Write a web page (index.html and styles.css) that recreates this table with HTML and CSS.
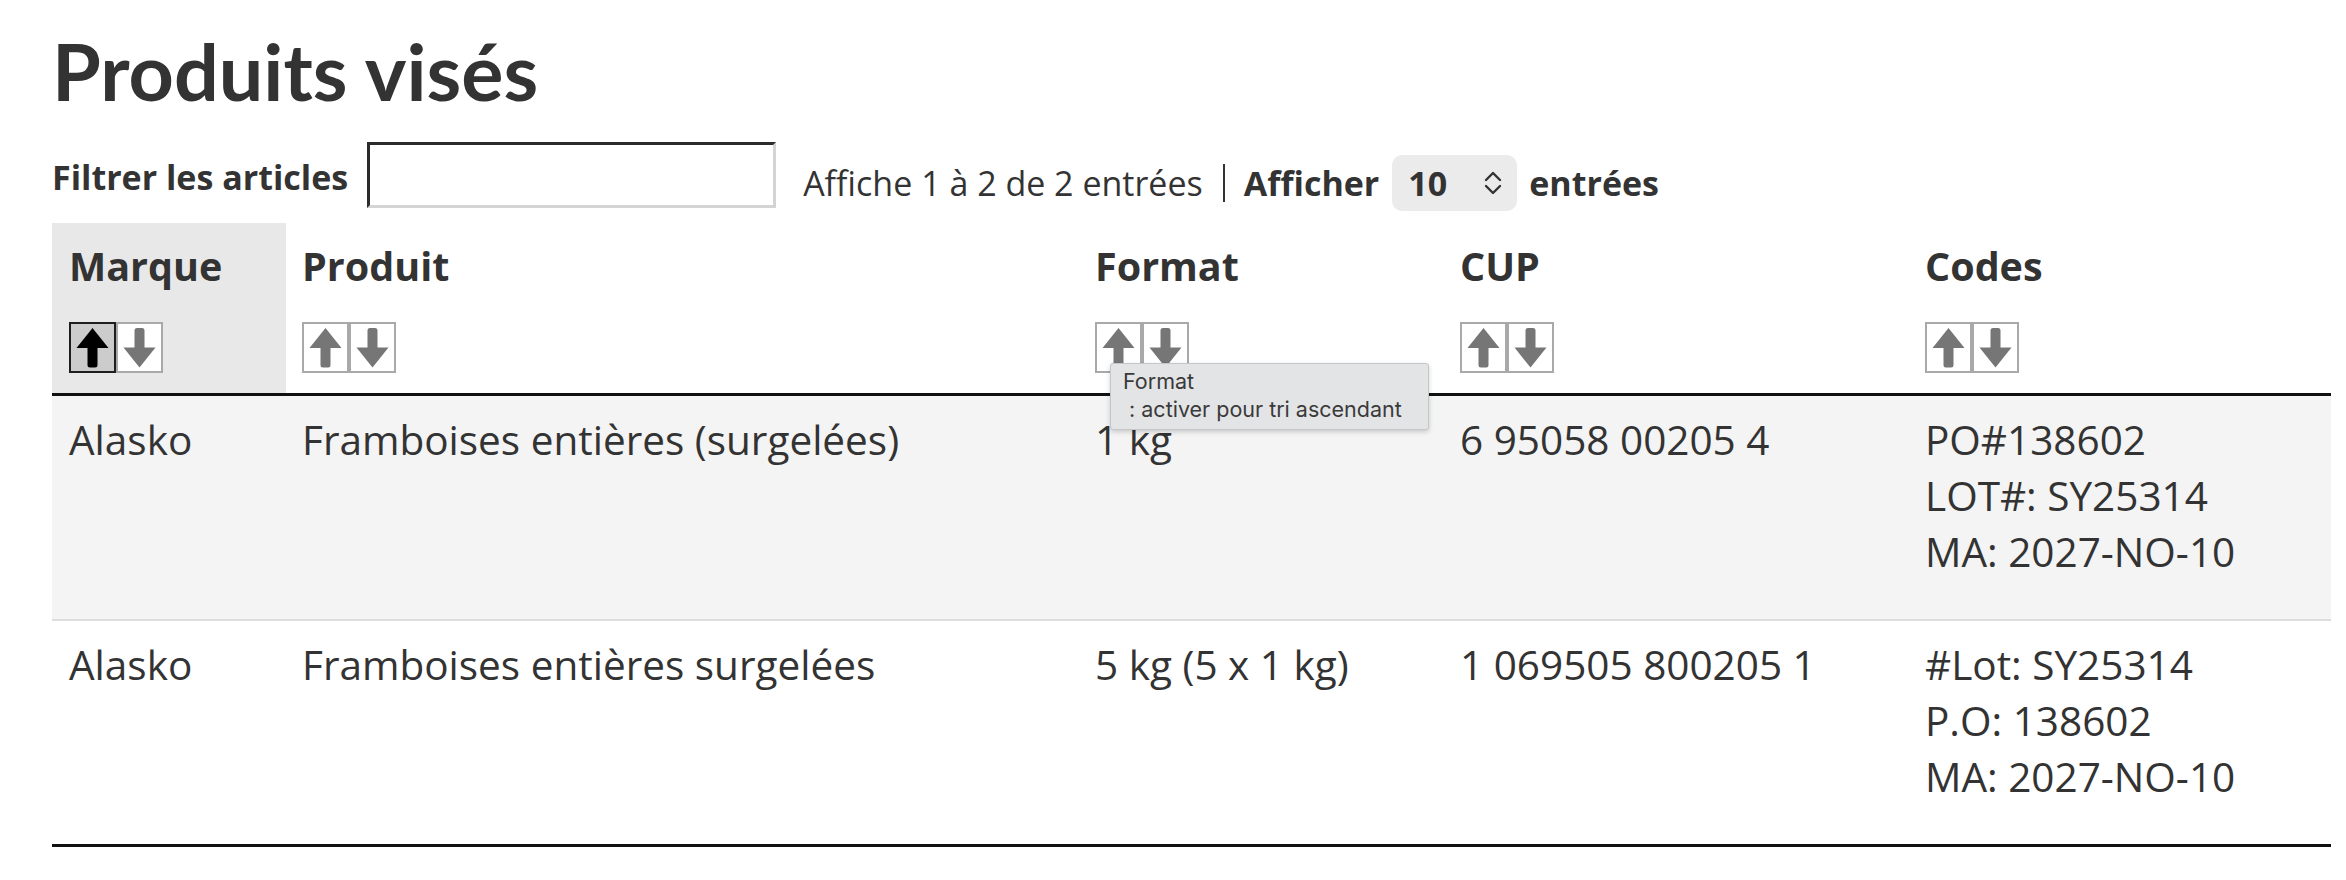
FILE: index.html
```html
<!DOCTYPE html>
<html lang="fr">
<head>
<meta charset="utf-8">
<title>Produits visés</title>
<link rel="stylesheet" href="styles.css">
</head>
<body>
<main class="page">
  <h1 class="title">Produits visés</h1>
  <div class="controls">
    <label class="filter-label" for="filtre">Filtrer les articles</label>
    <input id="filtre" class="filter-input" type="text">
    <div class="info">
      <span class="count">Affiche 1 à 2 de 2 entrées</span>
      <span class="sep"></span>
      <span class="len-label">Afficher</span>
      <div class="select">
        <span class="select-value">10</span>
        <svg class="chev" viewBox="0 0 20 26" width="20" height="26"><polyline points="3,10 10,3 17,10"/><polyline points="3,16 10,23 17,16"/></svg>
      </div>
      <span class="len-label">entrées</span>
    </div>
  </div>

  <table class="grid">
    <colgroup>
      <col class="c-marque"><col class="c-produit"><col class="c-format"><col class="c-cup"><col class="c-codes">
    </colgroup>
    <thead>
      <tr>
        <th class="sorted">
          <div class="th-label">Marque</div>
          <div class="sorters">
            <span class="sort active"><svg viewBox="0 0 43 46"><path d="M21.5 3.5 L37.5 23.5 L26.5 23.5 L26.5 40.5 Q26.5 43 24 43 L19 43 Q16.5 43 16.5 40.5 L16.5 23.5 L5.5 23.5 Z"/></svg></span>
            <span class="sort"><svg viewBox="0 0 43 46"><path d="M21.5 43 L37.5 23 L26.5 23 L26.5 6 Q26.5 3.5 24 3.5 L19 3.5 Q16.5 3.5 16.5 6 L16.5 23 L5.5 23 Z"/></svg></span>
          </div>
        </th>
        <th>
          <div class="th-label">Produit</div>
          <div class="sorters">
            <span class="sort"><svg viewBox="0 0 43 46"><path d="M21.5 3.5 L37.5 23.5 L26.5 23.5 L26.5 40.5 Q26.5 43 24 43 L19 43 Q16.5 43 16.5 40.5 L16.5 23.5 L5.5 23.5 Z"/></svg></span>
            <span class="sort"><svg viewBox="0 0 43 46"><path d="M21.5 43 L37.5 23 L26.5 23 L26.5 6 Q26.5 3.5 24 3.5 L19 3.5 Q16.5 3.5 16.5 6 L16.5 23 L5.5 23 Z"/></svg></span>
          </div>
        </th>
        <th>
          <div class="th-label">Format</div>
          <div class="sorters">
            <span class="sort"><svg viewBox="0 0 43 46"><path d="M21.5 3.5 L37.5 23.5 L26.5 23.5 L26.5 40.5 Q26.5 43 24 43 L19 43 Q16.5 43 16.5 40.5 L16.5 23.5 L5.5 23.5 Z"/></svg></span>
            <span class="sort"><svg viewBox="0 0 43 46"><path d="M21.5 43 L37.5 23 L26.5 23 L26.5 6 Q26.5 3.5 24 3.5 L19 3.5 Q16.5 3.5 16.5 6 L16.5 23 L5.5 23 Z"/></svg></span>
            <div class="tooltip">Format<br>&nbsp;: activer pour tri ascendant</div>
          </div>
        </th>
        <th>
          <div class="th-label">CUP</div>
          <div class="sorters">
            <span class="sort"><svg viewBox="0 0 43 46"><path d="M21.5 3.5 L37.5 23.5 L26.5 23.5 L26.5 40.5 Q26.5 43 24 43 L19 43 Q16.5 43 16.5 40.5 L16.5 23.5 L5.5 23.5 Z"/></svg></span>
            <span class="sort"><svg viewBox="0 0 43 46"><path d="M21.5 43 L37.5 23 L26.5 23 L26.5 6 Q26.5 3.5 24 3.5 L19 3.5 Q16.5 3.5 16.5 6 L16.5 23 L5.5 23 Z"/></svg></span>
          </div>
        </th>
        <th>
          <div class="th-label">Codes</div>
          <div class="sorters">
            <span class="sort"><svg viewBox="0 0 43 46"><path d="M21.5 3.5 L37.5 23.5 L26.5 23.5 L26.5 40.5 Q26.5 43 24 43 L19 43 Q16.5 43 16.5 40.5 L16.5 23.5 L5.5 23.5 Z"/></svg></span>
            <span class="sort"><svg viewBox="0 0 43 46"><path d="M21.5 43 L37.5 23 L26.5 23 L26.5 6 Q26.5 3.5 24 3.5 L19 3.5 Q16.5 3.5 16.5 6 L16.5 23 L5.5 23 Z"/></svg></span>
          </div>
        </th>
      </tr>
    </thead>
    <tbody>
      <tr class="odd">
        <td>Alasko</td>
        <td>Framboises entières (surgelées)</td>
        <td>1 kg</td>
        <td>6 95058 00205 4</td>
        <td>PO#138602<br>LOT#: SY25314<br>MA: 2027-NO-10</td>
      </tr>
      <tr class="even">
        <td>Alasko</td>
        <td>Framboises entières surgelées</td>
        <td>5 kg (5 x 1 kg)</td>
        <td>1 069505 800205 1</td>
        <td>#Lot: SY25314<br>P.O: 138602<br>MA: 2027-NO-10</td>
      </tr>
    </tbody>
  </table>
</main>
</body>
</html>
```

FILE: styles.css
```css
html, body {
  margin: 0;
  padding: 0;
  background: #ffffff;
}

body {
  font-family: "Open Sans", "Noto Sans", sans-serif;
  color: #333333;
}

.page {
  padding: 23px 15px 0 52px;
}

.title {
  margin: 0;
  font-family: Lato, "Open Sans", sans-serif;
  font-weight: 700;
  font-size: 79px;
  line-height: 96px;
  color: #333333;
}

.controls {
  display: flex;
  align-items: center;
  margin-top: 23px;
  height: 66px;
}

.filter-label {
  font-weight: 700;
  font-size: 34px;
  line-height: 47px;
  margin-top: 4px;
}

.filter-input {
  box-sizing: border-box;
  width: 409px;
  height: 66px;
  margin: 0 0 0 19px;
  padding: 0 10px;
  border-style: solid;
  border-width: 3px;
  border-color: #2b2b2b #d4d4d4 #d4d4d4 #2b2b2b;
  background: #ffffff;
  font-family: inherit;
  font-size: 30px;
}

.info {
  display: flex;
  align-items: center;
  margin-left: 27px;
  margin-top: 16px;
  font-size: 34px;
  line-height: 47px;
}

.count {
  font-weight: 400;
}

.sep {
  display: block;
  width: 2px;
  height: 38px;
  background: #333333;
  margin: 0 19px 0 20px;
}

.len-label {
  font-weight: 700;
}

.select {
  box-sizing: border-box;
  display: flex;
  align-items: center;
  justify-content: space-between;
  width: 125px;
  height: 56px;
  margin: 0 12px 0 13px;
  padding: 0 14px 0 16px;
  background: #ebebeb;
  border-radius: 10px;
  font-weight: 700;
}

.chev {
  fill: none;
  stroke: #333333;
  stroke-width: 2.4;
  stroke-linecap: round;
  stroke-linejoin: round;
}

.grid {
  margin-top: 15px;
  width: 2279px;
  border-collapse: collapse;
  table-layout: fixed;
  font-size: 40.5px;
  line-height: 56px;
}

.c-marque { width: 234px; }
.c-produit { width: 793px; }
.c-format { width: 365px; }
.c-cup { width: 465px; }
.c-codes { width: 422px; }

.grid thead tr {
  border-bottom: 3px solid #111111;
}

.grid th {
  text-align: left;
  vertical-align: top;
  font-weight: 700;
  font-size: 39.5px;
  padding: 15px 16px 20px 16px;
}

.grid th:first-child,
.grid td:first-child {
  padding-left: 17px;
}

.grid th.sorted {
  background: #e8e8e8;
}

.sorters {
  position: relative;
  display: flex;
  margin-top: 28px;
}

.sort {
  box-sizing: border-box;
  display: block;
  width: 47px;
  height: 51px;
  border: 2px solid #a9a9a9;
  background: #ffffff;
}

.sort svg {
  display: block;
  width: 43px;
  height: 47px;
  fill: #767676;
}

.sort.active {
  border-color: #1e1e1e;
  background: #cccccc;
}

.sort.active svg {
  fill: #000000;
}

.tooltip {
  position: absolute;
  left: 15px;
  top: 41px;
  z-index: 2;
  box-sizing: border-box;
  width: 319px;
  height: 67px;
  padding: 3px 12px 0 12px;
  background: #e3e4e6;
  border: 1px solid #c5c6c8;
  border-radius: 3px;
  box-shadow: 0 2px 5px rgba(0, 0, 0, 0.18);
  font-family: Inter, "Liberation Sans", sans-serif;
  font-weight: 400;
  font-size: 21.5px;
  line-height: 28px;
  color: #3a3a3a;
  white-space: nowrap;
}

.grid td {
  vertical-align: top;
  padding: 16px 16px 39px 16px;
}

.grid tr.odd {
  background: #f4f4f4;
  border-bottom: 2px solid #dddddd;
}

.grid tr.even {
  background: #ffffff;
  border-bottom: 3px solid #111111;
}
```
